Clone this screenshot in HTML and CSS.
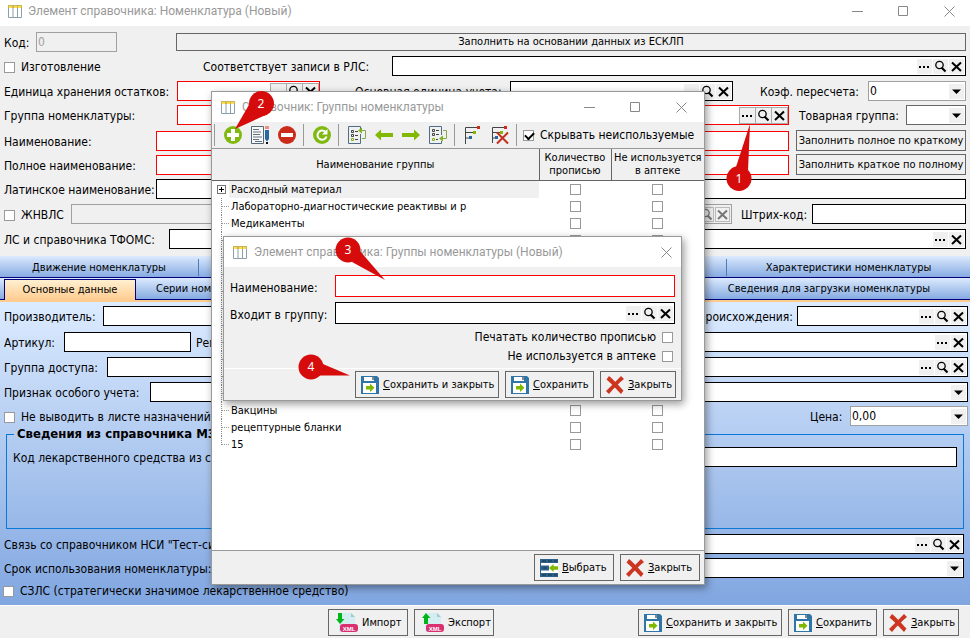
FILE: index.html
```html
<!DOCTYPE html>
<html lang="ru">
<head>
<meta charset="utf-8">
<title>Элемент справочника: Номенклатура (Новый)</title>
<link rel="stylesheet" href="styles.css">
</head>
<body>
<svg class="sprite" aria-hidden="true">
  <symbol id="i-table" viewBox="0 0 14 13"><path d="M.5 1v11.500h13V1M5 2v10M9.500 2v10" fill="#fff" stroke="#8a9fac"/><path d="M0 0h14v3H0z" fill="#c9b45a"/><path d="M1 1h3v2H1zM6 1h3v2H6zM10 1h3v2h-3z" fill="#fbdc4a"/></symbol>
  <symbol id="i-min" viewBox="0 0 11 11"><path d="M0 5.500h11" stroke="#888"/></symbol>
  <symbol id="i-max" viewBox="0 0 11 11"><path d="M.5.500h9v9h-9z" fill="none" stroke="#888"/></symbol>
  <symbol id="i-x" viewBox="0 0 11 11"><path d="M.5.500l10 10M10.500.500l-10 10" stroke="#888"/></symbol>
  <symbol id="i-dots" viewBox="0 0 15 15"><path d="M2 7h2v2H2zM6 7h2v2H6zM10 7h2v2h-2z" fill="currentColor"/></symbol>
  <symbol id="i-find" viewBox="0 0 15 15"><circle cx="6.500" cy="6" r="3.700" fill="none" stroke="currentColor" stroke-width="1.300"/><path d="M8.500 8.500l4 4" stroke="currentColor" stroke-width="2.200"/></symbol>
  <symbol id="i-clear" viewBox="0 0 15 15"><path d="M3 3.500l9 8.500M12 3.500L3 12" stroke="currentColor" stroke-width="2"/></symbol>
  <symbol id="i-down" viewBox="0 0 15 15"><path d="M3 5.500h9L7.500 10z" fill="currentColor"/></symbol>
  <symbol id="i-save" viewBox="0 0 18 18"><path d="M0 0h16l2 2v16H0z" fill="#2f75a8"/><path d="M3 1h10v4H3zM2 7h13v10H2z" fill="#fff"/><path d="M11 1h2v3h-2z" fill="#888"/><path d="M5 10h4V7.500l4.500 4.300L9 16v-2.500H5z" fill="#80b800"/></symbol>
  <symbol id="i-close" viewBox="0 0 18 18"><path d="M3 0C7 3 12 9 17.500 14.500L15 18C10 13 6 8 .5 3.500z" fill="#cc3520"/><path d="M15 0l3 3C12 8 8 12 3 18L0 15C5 10 9 6 15 0z" fill="#cc3520"/></symbol>
  <symbol id="i-pick" viewBox="0 0 18 18"><path d="M0 0h18v18H0z" fill="#fff"/><path d="M0 0h18v4H0zM0 14h18v4H0z" fill="#2d6288"/><path d="M0 4h1v10H0zM1 6.500h8v5H1z" fill="#2d6288"/><path d="M2 2h4M8 2h4M14 2h3M2 16h4M8 16h4M14 16h3M3 9h4" stroke="#16354e"/><path d="M9 9l4.500-4v2.300H18v3.400h-4.500V13z" fill="#80b800"/></symbol>
  <symbol id="i-import" viewBox="0 0 22 20"><path d="M3 0h12l4 4v15H3z" fill="#d3edf1"/><path d="M15 0v4h4z" fill="#9ccbd5"/><rect x="4" y="11" width="18" height="8" rx="3" fill="#da2f70"/><path d="M2 0h4v6h2.500L4 11 0 6h2z" fill="#00b519"/><text x="13" y="17.500" class="xml">XML</text></symbol>
  <symbol id="i-export" viewBox="0 0 22 20"><path d="M3 0h12l4 4v15H3z" fill="#d3edf1"/><path d="M15 0v4h4z" fill="#9ccbd5"/><rect x="4" y="11" width="18" height="8" rx="3" fill="#da2f70"/><path d="M2 11h4V5h2.500L4 0 0 5h2z" fill="#00b519"/><text x="13" y="17.500" class="xml">XML</text></symbol>
  <symbol id="t-add" viewBox="0 0 20 20"><circle cx="10" cy="10" r="9" fill="#80b910"/><path d="M10 4v12M4 10h12" stroke="#fff" stroke-width="4"/></symbol>
  <symbol id="t-edit" viewBox="0 0 20 20"><path d="M1.500 1.500h12v17h-12z" fill="#f8f8f8" stroke="#52677a"/><path d="M3 4.500h6M3 7h8M3 9.500h7M3 12h9M3 14.500h6M5 16.500h7" stroke="#607080"/><path d="M15 1h4v3h-4z" fill="#ee8f86"/><path d="M15 5h4v9l-2 2.500-2-2.500z" fill="#2769a0"/><path d="M16 17h2v2h-2z" fill="#111"/></symbol>
  <symbol id="t-del" viewBox="0 0 20 20"><circle cx="10" cy="10" r="9" fill="#cb2b1a"/><path d="M4 10h12" stroke="#fff" stroke-width="4"/></symbol>
  <symbol id="t-refresh" viewBox="0 0 20 20"><circle cx="10" cy="10" r="9" fill="#80b910"/><path d="M13.500 7A4.600 4.600 0 1 0 14.500 11.500" fill="none" stroke="#fff" stroke-width="2"/><path d="M15.500 4v5.500H10z" fill="#fff"/></symbol>
  <symbol id="t-in" viewBox="0 0 20 20"><path d="M13.500 4V1.500h-12v17h12V9" fill="none" stroke="#4f6d88"/><path d="M4.500 5.500h2v2h-2zM4.500 9.500h2v2h-2z" fill="none" stroke="#444"/><path d="M4.500 13.500h2v2h-2z" fill="none" stroke="#80b020"/><path d="M8 6.500h3M8 10.500h3M8 14.500h3" stroke="#444"/><path d="M14 5.500h4.500v8H15" fill="none" stroke="#86a84a"/><path d="M15 2.500v6l-4-3z" fill="#80b020"/></symbol>
  <symbol id="t-left" viewBox="0 0 20 20"><path d="M1 10l6-5.500V8h12v4H7v3.500z" fill="#80b900"/></symbol>
  <symbol id="t-right" viewBox="0 0 20 20"><path d="M19 10l-6-5.500V8H1v4h12v3.500z" fill="#80b900"/></symbol>
  <symbol id="t-out" viewBox="0 0 20 20"><path d="M13.500 10V1.500h-12v17h12V16" fill="none" stroke="#4f6d88"/><path d="M4.500 4.500h2v2h-2zM4.500 8.500h2v2h-2z" fill="none" stroke="#444"/><path d="M4.500 13.500h2v2h-2z" fill="none" stroke="#80b020"/><path d="M8 5.500h3M8 9.500h3M8 14.500h2" stroke="#444"/><path d="M15 5.500h3.500v8H15" fill="none" stroke="#86a84a"/><path d="M15 10.500v6l-4-3z" fill="#80b020"/></symbol>
  <symbol id="t-tree" viewBox="0 0 20 20"><path d="M2.500 19V2.500H16M2.500 7.500H11M2.500 13H7" fill="none" stroke="#444"/><path d="M14 1h3v3h-3z" fill="#cb2b1a"/><path d="M10 6h3v3h-3z" fill="#80b900"/><path d="M6 11h3v3H6z" fill="#2769a0"/></symbol>
  <symbol id="t-untree" viewBox="0 0 20 20"><path d="M2.500 18V2.500H16M2.500 7.500H11M2.500 13H7" fill="none" stroke="#444"/><path d="M14 1h3v3h-3z" fill="#cb2b1a"/><path d="M10 6h3v3h-3z" fill="#80b900"/><path d="M5 11h3v3H5z" fill="#2769a0"/><path d="M7 7.500l11 11M18 7.500l-11 11" stroke="#c0301c" stroke-width="2"/></symbol>
</svg>

<div class="desktop">
<main class="window main">
  <header class="title">
    <svg class="app"><use href="#i-table"/></svg><h1>Элемент справочника: Номенклатура (Новый)</h1>
    <button aria-label="Свернуть"><svg><use href="#i-min"/></svg></button><button aria-label="Развернуть"><svg><use href="#i-max"/></svg></button><button aria-label="Закрыть окно"><svg><use href="#i-x"/></svg></button>
  </header>

  <section class="form head">
    <div class="row r-code"><label for="code">Код:</label><input class="box off" id="code" value="0" disabled><button class="btn wide">Заполнить на основании данных из ЕСКЛП</button></div>
    <div class="row tight r-made"><label class="tick"><input type="checkbox">Изготовление</label><label for="rls">Соответствует записи в РЛС:</label>
      <div class="box"><input id="rls"><button aria-label="Выбор"><svg><use href="#i-dots"/></svg></button><button aria-label="Поиск"><svg><use href="#i-find"/></svg></button><button aria-label="Очистить"><svg><use href="#i-clear"/></svg></button></div></div>
    <div class="row r-unit"><label for="unit">Единица хранения остатков:</label>
      <div class="box need"><input id="unit"><button aria-label="Выбор"><svg><use href="#i-dots"/></svg></button><button aria-label="Поиск"><svg><use href="#i-find"/></svg></button><button aria-label="Очистить"><svg><use href="#i-clear"/></svg></button></div>
      <label for="base" class="in-35">Основная единица учета:</label>
      <div class="box"><input id="base"><button aria-label="Выбор"><svg><use href="#i-dots"/></svg></button><button aria-label="Поиск"><svg><use href="#i-find"/></svg></button><button aria-label="Очистить"><svg><use href="#i-clear"/></svg></button></div>
      <label for="coef" class="in-27">Коэф. пересчета:</label>
      <div class="box soft"><select id="coef"><option>0</option></select><svg class="arrow"><use href="#i-down"/></svg></div></div>
    <div class="row tight r-group"><label for="group">Группа номенклатуры:</label>
      <div class="box need"><input id="group"><button aria-label="Выбор"><svg><use href="#i-dots"/></svg></button><button aria-label="Поиск"><svg><use href="#i-find"/></svg></button><button aria-label="Очистить"><svg><use href="#i-clear"/></svg></button></div>
      <label for="goods" class="in-10">Товарная группа:</label>
      <div class="box mid"><select id="goods"><option></option></select><svg class="arrow"><use href="#i-down"/></svg></div></div>
    <div class="row r-name"><label for="name">Наименование:</label><div class="box need"><input id="name"></div><button class="btn">Заполнить полное по краткому</button></div>
    <div class="row tight r-name"><label for="full">Полное наименование:</label><div class="box need"><input id="full"></div><button class="btn">Заполнить краткое по полному</button></div>
    <div class="row r-latin"><label for="latin">Латинское наименование:</label><div class="box"><input id="latin"></div></div>
    <div class="row r-vital"><label class="tick"><input type="checkbox">ЖНВЛС</label>
      <div class="box off"><input aria-label="ЖНВЛС" disabled><button disabled aria-label="Поиск"><svg><use href="#i-find"/></svg></button><button disabled aria-label="Очистить"><svg><use href="#i-clear"/></svg></button></div>
      <label for="bar" class="in-9">Штрих-код:</label><div class="box"><input id="bar"></div></div>
    <div class="row r-tfoms"><label for="tf">ЛС и справочника ТФОМС:</label><div class="box"><input id="tf"><button aria-label="Выбор"><svg><use href="#i-dots"/></svg></button><button aria-label="Очистить"><svg><use href="#i-clear"/></svg></button></div></div>
  </section>

  <nav class="tabs upper"><button>Движение номенклатуры</button><button aria-label="Дополнительно"></button><button>Характеристики номенклатуры</button></nav>
  <nav class="tabs lower"><button class="on">Основные данные</button><button>Серии номенклатуры</button><button>Сведения для загрузки номенклатуры</button></nav>

  <section class="form page">
    <div class="row r-maker"><label for="maker">Производитель:</label><div class="box"><input id="maker"></div><label for="origin" class="end">Страна происхождения:</label>
      <div class="box"><input id="origin"><button aria-label="Выбор"><svg><use href="#i-dots"/></svg></button><button aria-label="Поиск"><svg><use href="#i-find"/></svg></button><button aria-label="Очистить"><svg><use href="#i-clear"/></svg></button></div></div>
    <div class="row gap6 r-art"><label for="art">Артикул:</label><div class="box"><input id="art"></div><label for="reg" class="in-5">Регистрационный номер:</label>
      <div class="box"><input id="reg"><button aria-label="Выбор"><svg><use href="#i-dots"/></svg></button><button aria-label="Очистить"><svg><use href="#i-clear"/></svg></button></div></div>
    <div class="row r-access"><label for="acc">Группа доступа:</label>
      <div class="box"><input id="acc"><button aria-label="Выбор"><svg><use href="#i-dots"/></svg></button><button aria-label="Поиск"><svg><use href="#i-find"/></svg></button><button aria-label="Очистить"><svg><use href="#i-clear"/></svg></button></div></div>
    <div class="row r-special"><label for="spec">Признак особого учета:</label><div class="box"><select id="spec"><option></option></select><svg class="arrow"><use href="#i-down"/></svg></div></div>
    <div class="row tight r-price"><label class="tick"><input type="checkbox">Не выводить в листе назначений</label><label for="price">Цена:</label><div class="box soft"><select id="price"><option>0,00</option></select><svg class="arrow"><use href="#i-down"/></svg></div></div>
    <fieldset><legend>Сведения из справочника МЗ</legend>
      <div class="row r-drug"><label for="drug">Код лекарственного средства из справочника:</label><div class="box"><input id="drug"></div></div></fieldset>
    <div class="row r-nsi"><label for="nsi">Связь со справочником НСИ "Тест-системы":</label>
      <div class="box"><input id="nsi"><button aria-label="Выбор"><svg><use href="#i-dots"/></svg></button><button aria-label="Поиск"><svg><use href="#i-find"/></svg></button><button aria-label="Очистить"><svg><use href="#i-clear"/></svg></button></div></div>
    <div class="row tight r-term"><label for="term">Срок использования номенклатуры:</label><div class="box"><select id="term"><option></option></select><svg class="arrow"><use href="#i-down"/></svg></div></div>
    <label class="tick last"><input type="checkbox">СЗЛС (стратегически значимое лекарственное средство)</label>
  </section>

  <footer class="bar foot">
    <button class="btn ico b80"><svg class="xico"><use href="#i-import"/></svg>Импорт</button>
    <button class="btn ico b80 push"><svg class="xico"><use href="#i-export"/></svg>Экспорт</button>
    <button class="btn ico b144"><svg><use href="#i-save"/></svg><span><u>С</u>охранить и закрыть</span></button>
    <button class="btn ico b89"><svg><use href="#i-save"/></svg><span><u>С</u>охранить</span></button>
    <button class="btn ico b76"><svg><use href="#i-close"/></svg><span><u>З</u>акрыть</span></button>
  </footer>
</main>

<section class="window dialog groups" role="dialog" aria-label="Справочник: Группы номенклатуры">
  <header class="title">
    <svg class="app"><use href="#i-table"/></svg><h2>Справочник: Группы номенклатуры</h2>
    <button aria-label="Свернуть"><svg><use href="#i-min"/></svg></button><button aria-label="Развернуть"><svg><use href="#i-max"/></svg></button><button aria-label="Закрыть окно"><svg><use href="#i-x"/></svg></button>
  </header>
  <div class="tools">
    <i></i><button aria-label="Добавить"><svg><use href="#t-add"/></svg></button><button aria-label="Изменить"><svg><use href="#t-edit"/></svg></button><button aria-label="Удалить"><svg><use href="#t-del"/></svg></button>
    <i></i><button aria-label="Обновить"><svg><use href="#t-refresh"/></svg></button>
    <i></i><button aria-label="В группу"><svg><use href="#t-in"/></svg></button><button aria-label="Назад"><svg><use href="#t-left"/></svg></button><button aria-label="Вперед"><svg><use href="#t-right"/></svg></button><button aria-label="Из группы"><svg><use href="#t-out"/></svg></button>
    <i></i><button aria-label="Дерево"><svg><use href="#t-tree"/></svg></button><button aria-label="Без дерева"><svg><use href="#t-untree"/></svg></button>
    <i></i><label class="tick"><input type="checkbox" checked>Скрывать неиспользуемые</label>
  </div>
  <div class="list">
  <table>
    <colgroup><col><col class="c-count"><col class="c-unused"></colgroup>
    <thead><tr><th>Наименование группы</th><th>Количество прописью</th><th>Не используется в аптеке</th></tr></thead>
    <tbody id="rows"></tbody>
  </table>
  </div>
  <footer class="bar">
    <button class="btn ico b80"><svg><use href="#i-pick"/></svg><span><u>В</u>ыбрать</span></button>
    <button class="btn ico b80"><svg><use href="#i-close"/></svg><span><u>З</u>акрыть</span></button>
  </footer>
</section>

<section class="window dialog item" role="dialog" aria-label="Элемент справочника: Группы номенклатуры (Новый)">
  <header class="title">
    <svg class="app"><use href="#i-table"/></svg><h2>Элемент справочника: Группы номенклатуры (Новый)</h2>
    <button aria-label="Закрыть окно"><svg><use href="#i-x"/></svg></button>
  </header>
  <div class="fields">
    <label for="gname">Наименование:</label><div class="box tall need"><input id="gname"></div>
    <label for="gparent">Входит в группу:</label>
    <div class="box tall"><input id="gparent"><button aria-label="Выбор"><svg><use href="#i-dots"/></svg></button><button aria-label="Поиск"><svg><use href="#i-find"/></svg></button><button aria-label="Очистить"><svg><use href="#i-clear"/></svg></button></div>
  </div>
  <div class="checks">
    <label class="tick">Печатать количество прописью<input type="checkbox"></label>
    <label class="tick">Не используется в аптеке<input type="checkbox"></label>
  </div>
  <footer class="bar">
    <button class="btn ico b144"><svg><use href="#i-save"/></svg><span><u>С</u>охранить и закрыть</span></button>
    <button class="btn ico b89"><svg><use href="#i-save"/></svg><span><u>С</u>охранить</span></button>
    <button class="btn ico b76"><svg><use href="#i-close"/></svg><span><u>З</u>акрыть</span></button>
  </footer>
</section>

<svg class="pins" viewBox="0 0 970 638" width="970" height="638">
  <g fill="#d60b0b"><path d="M750 124l-15 46 13 1z"/><circle cx="739" cy="178.500" r="12.500"/>
  <path d="M235 129l15-26 18 11z"/><circle cx="261.500" cy="103.500" r="12.500"/>
  <path d="M385 280l-33-18 8-11z"/><circle cx="348" cy="250" r="12.500"/>
  <path d="M350 375.500l-33-14-2 14z"/><circle cx="311" cy="367" r="12.500"/></g>
  <g class="num"><text x="739" y="183">1</text><text x="261" y="108">2</text><text x="348" y="254">3</text><text x="311" y="371">4</text></g>
</svg>
</div>
<script src="rows.js"></script>
</body>
</html>
```
FILE: styles.css
```css
* { box-sizing: border-box; }
body { margin: 0; font: 12px/16px "DejaVu Sans Condensed", "Noto Sans", sans-serif; color: #000; background: #f0f0f0; }
button, input, select { font: inherit; color: inherit; margin: 0; padding: 0; border: 0; background: none; border-radius: 0; }
h1, h2 { margin: 0; font: 12px/16px Roboto, sans-serif; color: #999; flex: 1; }
.sprite { position: absolute; width: 0; height: 0; }
.xml { font: bold 6px "Liberation Sans", sans-serif; fill: #fff; text-anchor: middle; }
.desktop { position: relative; min-height: 100vh; display: flex; overflow: hidden; }
.window { display: flex; flex-direction: column; background: #f0f0f0; }
.main { flex: 1; min-width: 0; }

.title { display: flex; align-items: center; background: #fff; height: 26px; padding: 0 15px 4px 8px; }
.title .app { width: 14px; height: 13px; margin-right: 6px; }
.title button { display: flex; margin-left: 35px; }
.title button svg { width: 11px; height: 11px; }

.form { display: flex; flex-direction: column; }
.head { padding: 6px 4px 7px; }
.row { display: grid; align-items: center; height: 20px; margin-top: 5px; }
.row:first-child { margin-top: 0; }
.row.tight { margin-top: 4px; }
.row.gap6 { margin-top: 6px; }
.row > label { white-space: nowrap; overflow: hidden; padding-top: 2px; }
.r-code { grid-template-columns: 32px 140px 1fr; }
.r-made { grid-template-columns: 199px 189px 1fr; }
.r-unit { grid-template-columns: 173px 143px 190px 1fr 135px 98px; }
.r-group { grid-template-columns: 173px 1fr 117px 60px; }
.r-name { grid-template-columns: 152px 1fr 177px; }
.r-latin { grid-template-columns: 152px 1fr; }
.r-vital { grid-template-columns: 67px 1fr 80px 154px; }
.r-tfoms { grid-template-columns: 165px 1fr; }
.r-maker { grid-template-columns: 99px 1fr 190px 171px; }
.r-art { grid-template-columns: 60px 127px 185px 1fr; }
.r-access { grid-template-columns: 103px 1fr; }
.r-special { grid-template-columns: 146px 1fr; }
.r-price { grid-template-columns: 1fr 40px 118px; }
.r-drug { grid-template-columns: 280px 1fr; }
.r-nsi, .r-term { grid-template-columns: 280px 1fr; }
.in-5 { padding-left: 5px; }
.in-9 { padding-left: 9px; }
.in-10 { padding-left: 10px; }
.in-27 { padding-left: 27px; }
.in-35 { padding-left: 35px; }
.end { text-align: right; padding-right: 4px; }

.box { display: flex; align-items: center; gap: 1px; height: 20px; padding: 1px; border: 1px solid #000; background: #fff; min-width: 0; }
.box.tall { height: 22px; }
.box.need { border-color: #f00; }
.box.need button { outline: 1px solid #aaa; }
.box.soft { border-color: #a0a0a0; }
.box.mid { border-color: #666; }
.box.off { border-color: #a0a0a0; background: #f0f0f0; color: #777; }
.box.off button { border: 1px solid #bbb; }
.box input, .box select { flex: 1; min-width: 0; width: 100%; height: 100%; appearance: none; outline: 0; }
.box button, .arrow { width: 15px; height: 15px; background: #f0f0f0; display: flex; flex: none; align-items: center; justify-content: center; }
.box button svg { width: 15px; height: 15px; flex: none; }
.arrow { pointer-events: none; }
.r-code .box { width: 81px; color: #a0a0a0; }

.btn { border: 1px solid #666; background: #f0f0f0; font-size: 11px; line-height: 14px; white-space: nowrap; height: 18px; }
.r-name .btn { height: 21px; margin-left: 7px; }
.btn.ico { height: 27px; display: flex; align-items: center; gap: 4px; padding: 0 5px; flex: none; }
.btn.ico svg { width: 18px; height: 18px; flex: none; }
.btn.ico .xico { width: 22px; height: 20px; margin-left: 2px; }
.b76 { width: 76px; }
.b80 { width: 80px; }
.b89 { width: 89px; }
.b144 { width: 144px; }

.tick { display: flex; align-items: center; gap: 6px; white-space: nowrap; }
input[type="checkbox"] { appearance: none; width: 11px; height: 11px; flex: none; border: 1px solid #999; background: #fff; }
input[type="checkbox"]:checked::after { content: ""; display: block; width: 7px; height: 4px; margin: 1px; border: solid #000; border-width: 0 0 2px 2px; transform: rotate(-45deg); }

.tabs { display: grid; background: linear-gradient(#dceafd, #86abe2); border-bottom: 1px solid #00007c; font-size: 11px; }
.tabs button { text-align: center; white-space: nowrap; overflow: hidden; }
.upper { grid-template-columns: 199px 1fr 243px; height: 22px; }
.upper button { border-right: 1px solid #4f78bd; margin: 3px 0 1px; }
.upper button:last-child { border: 0; }
.lower { grid-template-columns: 132px 198px 1fr; height: 24px; padding-left: 4px; border-bottom: 2px solid #ffcc90; background: linear-gradient(#dceafd, #86abe2 21px, #00007c 21px); }
.lower button { line-height: 18px; padding: 2px 0; }
.lower button:nth-child(2) { text-align: left; padding-left: 20px; }
.lower button:last-child { text-align: right; padding-right: 40px; }
.lower .on { border: solid #00007c; border-width: 1px 1px 0; margin-top: 1px; padding: 0; background: linear-gradient(#fff0d0, #ffcc90); }

.page { flex: 1; padding: 4px 2px 6px 4px; background: linear-gradient(#dcebff, #80a6e0); border-bottom: 1px solid #fff; }
fieldset { margin: 0 4px 0 2px; height: 103px; padding: 0 6px; border: 1px solid #0a78d6; min-width: 0; }
legend { font-weight: 700; font-size: 13px; line-height: 16px; padding: 0 3px; margin-left: 1px; white-space: nowrap; }
.r-nsi, .r-term { margin-right: 4px; }
.last { margin-top: 5px; }
.page .last { margin-left: -1px; }
.bar { display: flex; }
.foot { padding: 3px 11px 2px 328px; gap: 6px; }
.foot .push { margin-right: auto; }

.dialog { position: absolute; border: 1px solid #999; box-shadow: 2px 3px 8px rgba(0, 0, 0, .4); }
.dialog .title { height: 30px; padding: 0 17px 0 9px; }
.dialog .title .app { margin-right: 7px; }
.groups { left: 211px; top: 91px; width: 494px; height: 494px; }
.item { left: 223px; top: 236px; width: 459px; height: 165px; }
.item .title { padding-right: 9px; }

.tools { display: flex; align-items: center; height: 27px; border-bottom: 1px solid #999; }
.tools button { width: 27px; height: 22px; display: flex; align-items: center; justify-content: center; }
.tools svg { width: 20px; height: 20px; }
.tools i { width: 1px; height: 22px; background: #999; margin: 0 4px 0 3px; }
.tools i:first-child { margin-left: 2px; }
.tools .tick { margin-left: 2px; }

.list { flex: 1; background: #fff; border-bottom: 1px solid #999; }
table { width: 100%; table-layout: fixed; border-collapse: collapse; font-size: 11px; line-height: 13px; }
.c-count { width: 72px; }
.c-unused { width: 93px; }
th { height: 31px; padding: 0; font-weight: 400; background: #f0f0f0; border-bottom: 1px solid #666; border-left: 1px solid #666; }
th:first-child { border-left: 0; }
td { height: 17px; padding: 0; text-align: center; line-height: 15px; }
td:first-child { text-align: left; }
td input[type="checkbox"] { display: block; margin: 0 auto; }
.node { display: flex; align-items: center; height: 17px; padding-left: 9px; }
.node .stem { width: 10px; height: 17px; border-left: 1px dotted #888; background: repeating-linear-gradient(90deg, #999 0 1px, transparent 1px 2px) 0 8px / 8px 1px no-repeat; flex: none; }
.last-node .stem { height: 9px; align-self: flex-start; }
.node .plus { width: 9px; height: 9px; border: 1px solid #777; margin: 0 5px 0 -4px; background: linear-gradient(#000, #000) 1px 3px / 5px 1px no-repeat, linear-gradient(#000, #000) 3px 1px / 1px 5px no-repeat, #fff; flex: none; }
.chosen { background: #f0f0f0; padding: 0 2px; margin-left: -2px; flex: 1; line-height: 17px; }
.groups .bar { padding: 3px 4px 3px; gap: 6px; justify-content: flex-end; }

.fields { display: grid; grid-template-columns: 105px 1fr; gap: 5px 0; align-items: center; padding: 8px 6px 0; white-space: nowrap; }
.fields label { padding-top: 3px; }
.checks { display: flex; flex-direction: column; align-items: flex-end; gap: 3px; padding: 5px 8px 0; flex: 1; }
.item .bar { border-top: 1px solid #fff; padding: 2px 5px; gap: 6px; justify-content: flex-end; }

.pins { position: absolute; left: 0; top: 0; pointer-events: none; }
.num { font: 12px "Noto Sans", sans-serif; fill: #fff; text-anchor: middle; }
```
FILE: rows.js
```
const names = ["Расходный материал", "Лабораторно-диагностические реактивы и р", "Медикаменты",
  "", "", "", "", "", "", "", "", "", "", "Вакцины", "рецептурные бланки", "15"];

document.getElementById("rows").innerHTML = names.map((name, i) => {
  const lead = i === 0 ? '<span class="plus"></span>' : '<span class="stem"></span>';
  const text = `<span class="${i === 0 ? "chosen" : ""}">${name}</span>`;
  const last = i === names.length - 1 ? " last-node" : "";
  return `<tr><td><div class="node${last}">${lead}${text}</div></td>` +
    '<td><input type="checkbox" aria-label="Количество прописью"></td>' +
    '<td><input type="checkbox" aria-label="Не используется в аптеке"></td></tr>';
}).join("");
```
